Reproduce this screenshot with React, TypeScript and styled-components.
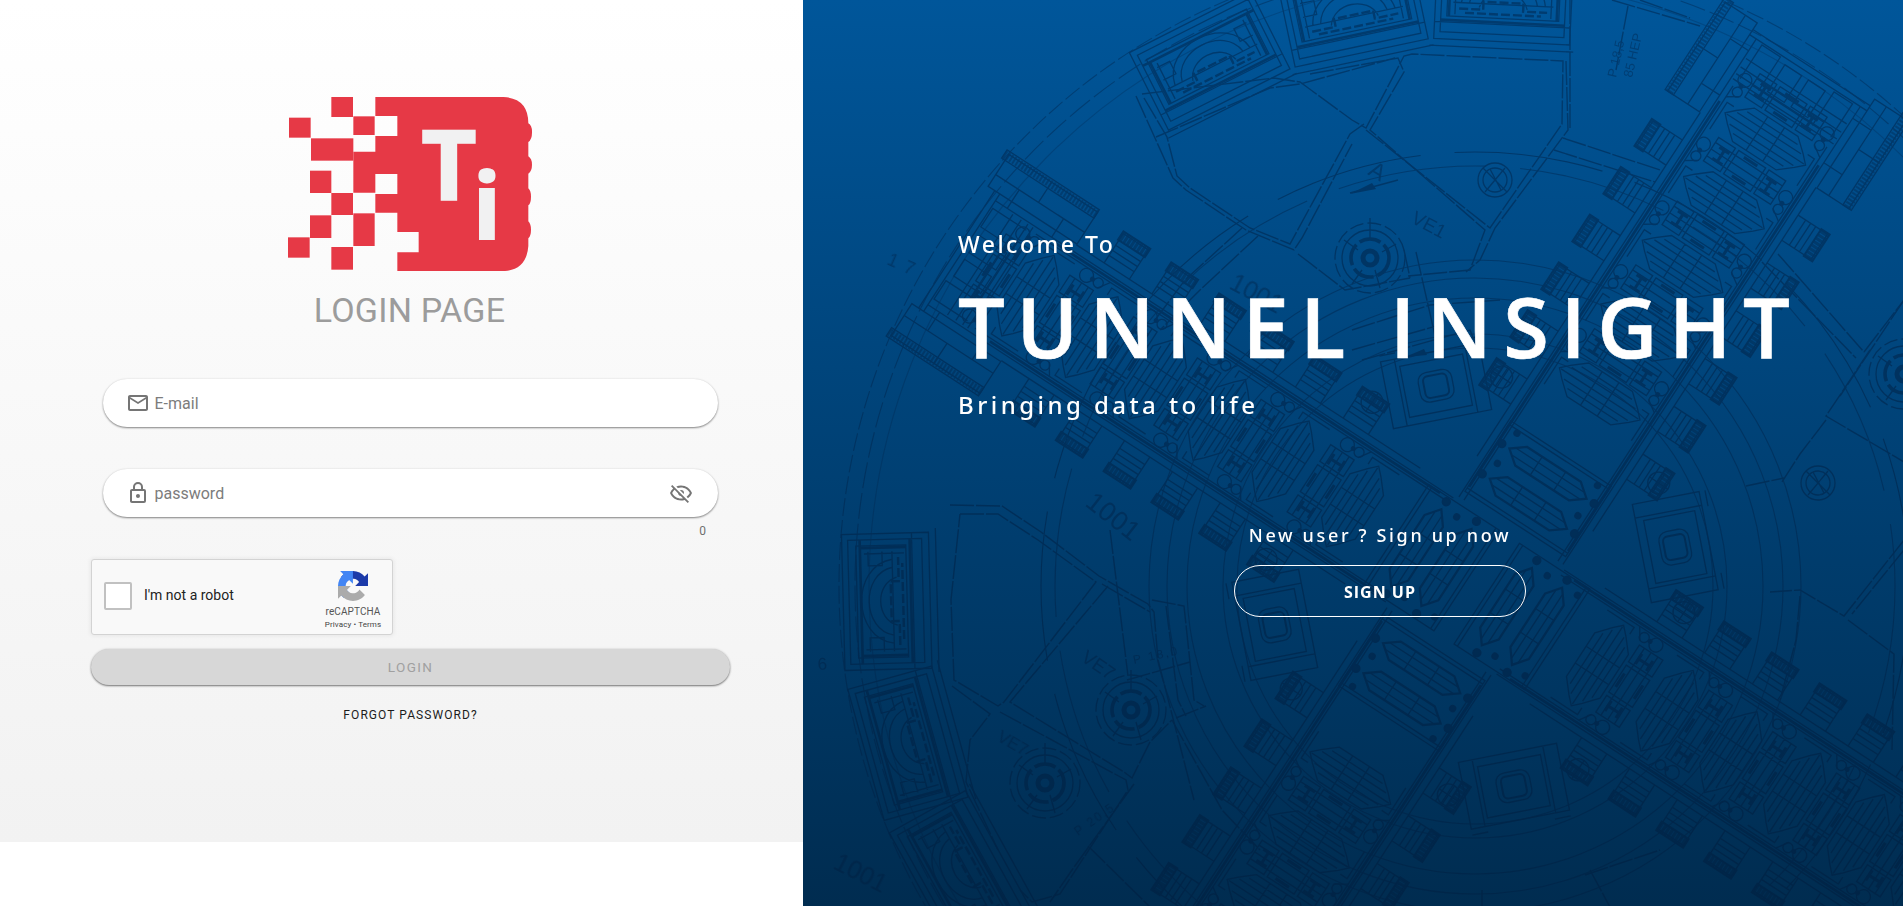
import React from "react";
import styled, { createGlobalStyle } from "styled-components";

const GlobalStyle = createGlobalStyle`
  * { box-sizing: border-box; }
  body { margin: 0; background: #fff; overflow: hidden; font-family: Roboto, "Liberation Sans", sans-serif; }
`;

const Page = styled.main`
  display: flex;
  width: 1904px;
  height: 907px;
`;

/* ---------- login side ---------- */

const LoginPane = styled.section`
  display: flex;
  flex-direction: column;
  align-items: flex-start;
  width: 803px;
  height: 842px;
  padding: 96px 73px 0 91px;
  background: linear-gradient(#ffffff, #f2f2f2);
`;

const Brand = styled.header`
  display: flex;
  flex-direction: column;
  align-items: center;
  width: 637px;
`;

const LogoSvg = styled.svg`
  display: block;
  width: 246px;
  height: 176px;
`;

const Title = styled.h1`
  margin: 18px 0 0;
  font-size: 34px;
  line-height: 40px;
  font-weight: 400;
  letter-spacing: 0.2px;
  color: #9c9c9c;
`;

const Form = styled.form`
  display: flex;
  flex-direction: column;
  width: 639px;
  margin-top: 49px;
`;

const Field = styled.label<{ $gap?: number }>`
  display: flex;
  align-items: center;
  height: 48px;
  margin: ${(p) => p.$gap ?? 0}px 12px 0;
  padding: 0 25px 0 23px;
  border-radius: 24px;
  background: #fff;
  box-shadow: 0 1px 2px rgba(0, 0, 0, 0.46), 0 0 3px rgba(0, 0, 0, 0.06);
`;

const FieldInput = styled.input`
  flex: 1;
  min-width: 0;
  margin-left: 4.5px;
  padding: 1px 0 0;
  border: 0;
  outline: 0;
  background: transparent;
  font: 400 16px/20px Roboto, sans-serif;
  &::placeholder { color: #7c7c7c; opacity: 1; }
`;

const Icon = styled.svg`
  display: block;
  width: 24px;
  height: 24px;
  fill: #757575;
`;

const Counter = styled.div`
  margin: 8px 24px 0 0;
  text-align: right;
  font-size: 12px;
  line-height: 12px;
  color: #6f6f6f;
`;

const Captcha = styled.div`
  display: flex;
  align-items: center;
  width: 302px;
  height: 76px;
  margin-top: 22px;
  padding: 0 9px 3px 12px;
  border: 1px solid #d3d3d3;
  border-radius: 3px;
  background: #f9f9f9;
  box-shadow: 0 0 4px 1px rgba(0, 0, 0, 0.06);
`;

const Checkbox = styled.span`
  width: 28px;
  height: 28px;
  border: 2px solid #c1c1c1;
  border-radius: 2px;
  background: #fff;
`;

const CaptchaLabel = styled.span`
  flex: 1;
  margin-left: 12px;
  font-size: 14px;
  line-height: 17px;
  color: #222;
`;

const CaptchaBrand = styled.div`
  display: flex;
  flex-direction: column;
  align-items: center;
  width: 60px;
  padding-top: 10px;
  color: #555;
`;

const CaptchaLogo = styled.svg`
  width: 30px;
  height: 30px;
`;

const CaptchaName = styled.span`
  margin-top: 5px;
  font-size: 10px;
  line-height: 12px;
  letter-spacing: 0.1px;
`;

const CaptchaLinks = styled.span`
  font-size: 8px;
  line-height: 13px;
  letter-spacing: 0.1px;
  color: #444;
`;

const LoginButton = styled.button`
  height: 36px;
  margin-top: 14px;
  border: 0;
  border-radius: 18px;
  background: #d7d7d7;
  box-shadow: 0 1px 2px rgba(0, 0, 0, 0.5), 0 0 3px rgba(0, 0, 0, 0.1);
  font: 400 13.5px/20px Roboto, sans-serif;
  letter-spacing: 1.35px;
  color: #a0a0a0;
`;

const ForgotLink = styled.a`
  align-self: center;
  margin-top: 20px;
  font-size: 12px;
  line-height: 20px;
  letter-spacing: 1.07px;
  color: #1c1c1c;
`;

/* ---------- welcome side ---------- */

const WelcomePane = styled.section`
  position: relative;
  width: 1100px;
  height: 906px;
  padding: 228px 0 0 155px;
  overflow: hidden;
  background: linear-gradient(#00569a, #002c50);
  font-family: "Noto Sans", "Open Sans", sans-serif;
  color: #fff;
`;

const Blueprint = styled.svg`
  position: absolute;
  inset: 0;
  width: 100%;
  height: 100%;
  fill: none;
  stroke: #001c3c;
  stroke-width: 1.3;
  opacity: 0.44;
`;

const WelcomeText = styled.div`
  position: relative;
  display: flex;
  flex-direction: column;
  white-space: nowrap;
`;

const Line = styled.p<{ $size: number; $spacing: number }>`
  margin: 0;
  font-size: ${(p) => p.$size}px;
  line-height: 32px;
  font-weight: 500;
  letter-spacing: ${(p) => p.$spacing}px;
`;

const Headline = styled.h2`
  margin: 16px 0 13px;
  font-family: "Open Sans", "Noto Sans", sans-serif;
  font-size: 83px;
  line-height: 100px;
  font-weight: 600;
  letter-spacing: 11.5px;
  -webkit-text-stroke: 0.6px #fff;
`;

const SignUpBlock = styled.div`
  display: flex;
  flex-direction: column;
  align-items: center;
  width: 292px;
  margin: 98px 0 0 276px;
`;

const SignUpButton = styled.button`
  width: 292px;
  height: 52px;
  margin-top: 14px;
  padding: 2px 0 0;
  border: 1px solid #fff;
  border-radius: 26px;
  background: transparent;
  font: 700 16px/24px "Open Sans", sans-serif;
  letter-spacing: 1px;
  color: #fff;
`;

const PIXELS: [number, number, number, number][] = [
  [184, 51, 65, 60], [250, 109, 64, 56], [57, 113, 65, 60], [123, 175, 127, 67],
  [120, 272, 64, 67], [184, 339, 65, 66], [120, 406, 64, 68], [54, 472, 65, 61],
  [184, 501, 65, 68], [250, 400, 64, 98],
];

const Logo = () => (
  <LogoSvg viewBox="51 48 738 528">
    <g fill="#e63946">
      {PIXELS.map(([x, y, w, h]) => (
        <rect key={`${x}-${y}`} x={x} y={y} width={w} height={h} />
      ))}
      <path d="M316 51H700Q775 55 775 130Q787 137 786 158Q786 178 775 186V229Q786 236 786 254Q786 273 775 281V325Q783 332 783 350Q783 370 775 376V424Q783 432 783 449Q783 467 775 475V498Q770 568 705 573H382V517H446V456H382V398H316V342H382V282H316V338H250V215H316V168H382V108H316Z" />
    </g>
    <g fill="#f1f1f2" stroke="#f1f1f2" fontFamily="Noto Sans, Open Sans, sans-serif" fontWeight="700" textAnchor="middle">
      <text x="537" y="359" fontSize="288" strokeWidth="5">T</text>
      <text x="651" y="478" fontSize="274" strokeWidth="6">i</text>
    </g>
  </LogoSvg>
);

const PATHS = {
  email: "M22 6C22 4.9 21.1 4 20 4H4C2.9 4 2 4.9 2 6V18C2 19.1 2.9 20 4 20H20C21.1 20 22 19.1 22 18V6M20 6L12 11L4 6H20M20 18H4V8L12 13L20 8V18Z",
  lock: "M12,17C10.89,17 10,16.1 10,15C10,13.89 10.89,13 12,13A2,2 0 0,1 14,15A2,2 0 0,1 12,17M18,20V10H6V20H18M18,8A2,2 0 0,1 20,10V20A2,2 0 0,1 18,22H6C4.89,22 4,21.1 4,20V10C4,8.89 4.89,8 6,8H7V6A5,5 0 0,1 12,1A5,5 0 0,1 17,6V8H18M12,3A3,3 0 0,0 9,6V8H15V6A3,3 0 0,0 12,3Z",
  eyeOff: "M2,5.27L3.28,4L20,20.72L18.73,22L15.65,18.92C14.5,19.3 13.28,19.5 12,19.5C7,19.5 2.73,16.39 1,12C1.69,10.24 2.79,8.69 4.19,7.46L2,5.27M12,9A3,3 0 0,1 15,12C15,12.35 14.94,12.69 14.83,13L11,9.17C11.31,9.06 11.65,9 12,9M12,4.5C17,4.5 21.27,7.61 23,12C22.18,14.08 20.79,15.88 19,17.19L17.58,15.76C18.94,14.82 20.06,13.54 20.82,12C19.17,8.64 15.76,6.5 12,6.5C10.91,6.5 9.84,6.68 8.84,7L7.3,5.47C8.74,4.85 10.33,4.5 12,4.5M3.18,12C4.83,15.36 8.24,17.5 12,17.5C12.69,17.5 13.37,17.43 14,17.29L11.72,15C10.29,14.85 9.15,13.71 9,12.28L5.6,8.87C4.61,9.72 3.78,10.78 3.18,12Z",
};

const MdIcon = ({ name }: { name: keyof typeof PATHS }) => (
  <Icon viewBox="0 0 24 24"><path d={PATHS[name]} /></Icon>
);

/* ---------- floor plan drawn behind the welcome text ---------- */

/* One hall of an arm: a long room with benches and a lobby beside it. */
const Hall = () => (
  <g id="hall">
    <path d="M-20-26L-8-40L0-48L8-40L20-26V26L8 40L0 48L-8 40L-20 26ZM-13-30V30M-7-38V38M0-46V46M7-38V38M13-30V30M-20-10H20M-20 10H20" />
    <path d="M24-40H52V-20H24ZM24-16H52V16H24ZM24 20H52V40H24ZM30-40V40M38-40V40M46-40V40" />
    <path strokeWidth="3" d="M31-34V-22M44-34V-22M31-28H44M31 22V34M44 22V34M31 28H44M27-8V8M49-8V8" />
    <path d="M-22-52H10V-44M-22 52H10V44M14-56L22-44M14 56L22 44" />
    <circle cx="38" cy="-49" r="7" /><circle cx="38" cy="49" r="7" />
    <circle cx="24" cy="-49" r="5" /><circle cx="24" cy="49" r="5" />
    <circle cx="31" cy="-49" r="1.8" fill="#001c3c" /><circle cx="31" cy="49" r="1.8" fill="#001c3c" />
  </g>
);

/* An arm of the building, running outward along +x. */
const Arm = () => (
  <g id="arm">
    <path d="M66-62H612M66-56H560M66 56H560M66 62H612M110-69H520M110 69H520" />
    <path strokeWidth="2.6" d="M80-59H540M80 59H540" />
    {[229, 305, 381, 457, 533].map((x) => (
      <use key={x} href="#hall" x={x} />
    ))}
    {[187, 244, 301, 358, 415, 472].map((x) =>
      [-1, 1].map((s) => (
        <g key={`${x}${s}`} transform={`translate(${x}) scale(1 ${s})`}>
          <path d="M-15 69V104H15V69M-15 78H15M-15 84H15M-15 90H15" />
          <path strokeWidth="10" strokeDasharray="3 1" opacity=".75" d="M-16 101H16" />
          <path strokeWidth="2" d="M-16 96H16V106H-16Z" />
        </g>
      ))
    )}
    {[-1, 1].map((s) => (
      <g key={s} transform={`scale(1 ${s})`}>
        <path d="M520 70H626V108H520ZM520 84H626M575 84V108M598 62V84M545 62V84" />
        <path strokeWidth="8" strokeDasharray="2 1.6" opacity=".7" d="M520 106H630" />
        <path d="M520 101H630V111H520Z" />
      </g>
    ))}
    <path d="M566-60V60M572-60V60M580-60V60M612-70V70M618-70V70M570-54H610V-32H570M574-24H606V-4H574ZM574 4H606V24H574ZM570 32H610V54H570M590-60V60" />
  </g>
);

/* A pavilion on the outer ring; -y points away from the centre. */
const Pavilion = () => (
  <g id="pavilion">
    <path d="M-68 45V-42H68V45ZM-62 38V-36H62V38ZM-68 28H68M-72 52H72M-56-28H56V22H-56Z" />
    <path strokeWidth="2.6" d="M-62-24H62M-62 26H62M-54-24V22M54-24V22" />
    <path d="M-42 8C-36-34 36-34 42 8M-34 8C-28-24 28-24 34 8M-24 12C-18-10 18-10 24 12M-50 8H50M-50-16H-36V-2H-50M50-16H36V-2H50M-48-20V20M48-20V20" />
    <path strokeWidth="2.4" d="M-44 14H-20V6H20V14H44M-38 18H38" strokeDasharray="9 3" />
  </g>
);

const Plaza = () => (
  <g id="plaza">
    <path d="M-50-34H50V34H-50ZM-36-34V34M36-34V34M-32-26H32V26H-32ZM-50-40H-34M34-40H50" />
    <rect x="-17" y="-15" width="34" height="30" rx="9" />
    <rect x="-12" y="-11" width="24" height="22" rx="5" strokeWidth="2" />
    <circle cx="-66" cy="4" r="11" /><path d="M-74-4L-58 12M-58-4L-74 12" />
    <circle cx="66" cy="4" r="11" /><path d="M58-4L74 12M74-4L58 12" />
  </g>
);

const Hulls = () => (
  <g id="hulls">
    {[-18, 18].map((x) => (
      <g key={x} transform={`translate(${x})`}>
        <path strokeWidth="2.2" d="M-11-32L0-46L11-32V32L0 46L-11 32Z" />
        <path d="M-4-40V40M4-40V40M-11-14H11M-11 14H11" />
        <g fill="#001c3c">
          <circle cx="0" cy="-55" r="4" /><circle cx="0" cy="55" r="4" />
          <circle cx="17" cy="-48" r="3" /><circle cx="17" cy="48" r="3" />
        </g>
      </g>
    ))}
    <path d="M-42-60H42V60H-42ZM-38-60V60M38-60V60" />
  </g>
);

const Target = ({ x, y }: { x: number; y: number }) => (
  <g transform={`translate(${x} ${y})`}>
    <circle r="7" strokeWidth="5" />
    <circle r="19" strokeWidth="3.6" strokeDasharray="22 4" />
    <circle r="28" /><circle r="35" strokeDasharray="14 4" />
    <path d="M-26-18L-12-8M26-14L12-6M-18 26L-8 12M10 30L5 12M0-40V-20" />
  </g>
);

const Crossed = ({ x, y }: { x: number; y: number }) => (
  <g transform={`translate(${x} ${y})`}>
    <circle r="17" /><circle r="12" /><path d="M-12-12L12 12M10-12L-10 12M-5-11L6 10" />
  </g>
);

const WALLS = [
  "M1136 96L1173 178L1186 190L1246 230L1294 250L1302 238L1352 144",
  "M1144 98L1167 137L1177 176L1190 188L1250 228L1290 244L1350 134L1364 124",
  "M1142 94L1274 78L1300 82L1352 120L1366 128L1404 56L1412 54L1563 61L1562 124L1490 228L1366 130",
  "M1156 137L1270 88L1300 84L1395 58M1310 74L1398 58L1404 72L1370 130L1485 230L1470 270L1408 276",
  "M1566 61L1568 130L1495 228L1480 260L1466 272M1298 254L1345 290L1410 278",
  "M1570 0V130M1563 138L1660 170M1554 150L1655 182",
  "M1242 228L1185 280L1155 320M1258 236L1200 290L1160 330",
  "M950 505L1002 506L1041 532L1099 576L1148 604L1154 612L1158 660L1194 800",
  "M960 514L998 514L1038 540L1096 582L1004 702L998 706L954 680L951 600L960 514",
  "M1108 586L1010 702L1124 772L1132 778L1150 742L1172 720M1102 584L1150 612",
  "M952 686L990 714L970 740L966 782L998 850M1000 712L1126 780L1128 790L1060 894L1032 902L1020 890",
  "M1134 784L1072 870L1050 902M1088 846L1150 907M1172 720L1222 810L1260 850M1110 530L1128 676M1127 680L1190 662",
  "M1152 600L1184 606L1194 700L1204 706M1166 606L1178 700L1186 716M1176 718L1206 706",
  "M1870 350L1826 416L1904 462M1904 300L1840 396M1826 420L1800 454L1782 482M1746 486L1784 478",
  "M1904 540L1844 616L1800 590L1770 592M1848 620L1894 654L1892 750M1800 596L1796 640L1780 700M1904 550L1852 614",
  "M1778 254L1864 352M1762 262L1856 358M1864 352L1904 300",
  "M1612 0L1700 26M1628 6L1616 70M1640 0L1690 18",
  "M1590 870L1610 907M1585 875L1660 850M1482 890V907",
  "M1352 330L1430 305L1500 300M1352 350L1440 325M1404 250L1410 278M1416 252L1436 340M1362 360L1470 330L1478 350",
];

const FloorPlan = () => (
  <Blueprint viewBox="803 0 1100 906" aria-hidden="true">
    <defs><Hall /><Arm /><Pavilion /><Plaza /><Hulls /></defs>
    <g transform="translate(1475 586)">
      {[33, 123, 213, 303].map((a) => (
        <use key={a} href="#arm" transform={`rotate(${a})`} />
      ))}
      {[33, 213].map((a) => (
        <use key={a} href="#hall" transform={`rotate(${a}) translate(146)`} />
      ))}
      {[-105.5, -91.5, -119, -26.8, -12, 2.8].map((a) => (
        <use key={a} href="#pavilion" transform={`rotate(${a}) translate(0 -590)`} />
      ))}
      {[-11, 79, 169, 259].map((a) => (
        <use key={a} href="#plaza" transform={`rotate(${a}) translate(0 -204)`} />
      ))}
      <use href="#hulls" transform="rotate(33) translate(56)" />
      <use href="#hulls" transform="rotate(33) translate(-52)" />
      <use href="#hulls" transform="rotate(123) translate(116)" />
      <use href="#hulls" transform="rotate(303) translate(116)" />
      <g strokeWidth="1.1">
        <circle r="636" strokeDasharray="18 4" opacity=".8" />
        <circle r="620" strokeDasharray="26 5" opacity=".8" />
        <circle r="606" opacity=".5" />
        <circle r="434" strokeDasharray="150 34" />
        <circle r="420" strokeDasharray="150 34" opacity=".8" />
        {[326, 308, 288, 252, 238].map((r) => (
          <circle key={r} r={r} opacity=".8" />
        ))}
      </g>
    </g>
    <g strokeWidth="1.4">
      {WALLS.map((d) => <path key={d} d={d} strokeDasharray="24 2" />)}
    </g>
    <Target x={1370} y={258} />
    <Target x={1131} y={710} />
    <Target x={1045} y={783} />
    <Target x={1904} y={374} />
    <Crossed x={1495} y={180} />
    <Crossed x={1818} y={483} />
    <g fill="#001c3c" stroke="none">
      <path d="M1350 194L1372 183L1376 189ZM1405 357L1424 349L1427 355Z" />
      <path d="M1350 193L1398 180" stroke="#001c3c" />
    </g>
    <g fill="#001c3c" stroke="none" fontFamily="Liberation Sans, sans-serif" opacity=".85">
      <text transform="translate(1084 505) rotate(38)" fontSize="27">1001</text>
      <text transform="translate(1228 288) rotate(28)" fontSize="25">1001</text>
      <text transform="translate(832 868) rotate(27)" fontSize="25">1001</text>
      <text transform="translate(1080 660) rotate(35)" fontSize="19">VE7</text>
      <text transform="translate(1410 222) rotate(28)" fontSize="19">VE1</text>
      <text transform="translate(996 740) rotate(30)" fontSize="17">VE7</text>
      <text transform="translate(886 264) rotate(24)" fontSize="18" letterSpacing="8">17</text>
      <text transform="translate(818 670) rotate(-4)" fontSize="17">6</text>
      <text transform="translate(1367 174) rotate(30)" fontSize="23">A</text>
      <text transform="translate(1134 664) rotate(-12)" fontSize="12" letterSpacing="2">Р 18,0</text>
      <text transform="translate(1078 836) rotate(-35)" fontSize="12" letterSpacing="2">Р 20,5</text>
      <text transform="translate(1632 78) rotate(-77)" fontSize="13">85 НЕР</text>
      <text transform="translate(1616 78) rotate(-77)" fontSize="13">Р 18,5</text>
    </g>
  </Blueprint>
);

export default function App() {
  return (
    <Page>
      <GlobalStyle />
      <LoginPane>
        <Brand>
          <Logo />
          <Title>LOGIN PAGE</Title>
        </Brand>
        <Form onSubmit={(e) => e.preventDefault()}>
          <Field>
            <MdIcon name="email" />
            <FieldInput type="email" placeholder="E-mail" />
          </Field>
          <Field $gap={42}>
            <MdIcon name="lock" />
            <FieldInput type="password" placeholder="password" />
            <MdIcon name="eyeOff" />
          </Field>
          <Counter>0</Counter>
          <Captcha>
            <Checkbox />
            <CaptchaLabel>I'm not a robot</CaptchaLabel>
            <CaptchaBrand>
              <CaptchaLogo viewBox="0 0 64 64">
                <path fill="#1c3aa9" d="M64 31.955l-.033-1.37V4.687l-7.16 7.16C50.948 4.674 42.033.093 32.05.093c-10.4 0-19.622 4.96-25.458 12.64l11.736 11.86a15.55 15.55 0 0 1 4.754-5.334c2.05-1.6 4.952-2.906 8.968-2.906.485 0 .86.057 1.135.163 4.976.393 9.288 3.14 11.828 7.124l-8.307 8.307L64 31.953" />
                <path fill="#4285f4" d="M31.862.094l-1.37.033H4.594l7.16 7.16C4.58 13.147 0 22.06 0 32.046c0 10.4 4.96 19.622 12.64 25.458L24.5 45.768a15.55 15.55 0 0 1-5.334-4.754c-1.6-2.05-2.906-4.952-2.906-8.968 0-.485.057-.86.163-1.135.393-4.976 3.14-9.288 7.124-11.828l8.307 8.307L31.86.095" />
                <path fill="#ababab" d="M.001 32.045l.033 1.37v25.898l7.16-7.16c5.86 7.173 14.774 11.754 24.76 11.754 10.4 0 19.622-4.96 25.458-12.64l-11.736-11.86a15.55 15.55 0 0 1-4.754 5.334c-2.05 1.6-4.952 2.906-8.968 2.906-.485 0-.86-.057-1.135-.163-4.976-.393-9.288-3.14-11.828-7.124l8.307-8.307c-10.522.04-22.4.066-27.295-.005" />
              </CaptchaLogo>
              <CaptchaName>reCAPTCHA</CaptchaName>
              <CaptchaLinks>Privacy • Terms</CaptchaLinks>
            </CaptchaBrand>
          </Captcha>
          <LoginButton type="submit">LOGIN</LoginButton>
          <ForgotLink>FORGOT PASSWORD?</ForgotLink>
        </Form>
      </LoginPane>
      <WelcomePane>
        <FloorPlan />
        <WelcomeText>
          <Line $size={23} $spacing={2.5}>Welcome To</Line>
          <Headline>TUNNEL INSIGHT</Headline>
          <Line $size={24} $spacing={3.45}>Bringing data to life</Line>
          <SignUpBlock>
            <Line $size={18} $spacing={2.65}>New user ? Sign up now</Line>
            <SignUpButton>SIGN UP</SignUpButton>
          </SignUpBlock>
        </WelcomeText>
      </WelcomePane>
    </Page>
  );
}
